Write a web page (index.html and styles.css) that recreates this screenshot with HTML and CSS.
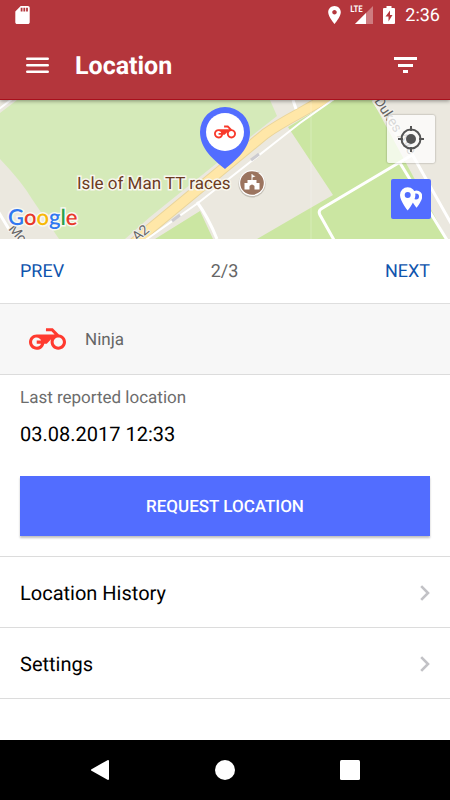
FILE: index.html
```html
<!DOCTYPE html>
<html lang="en">
<head>
<meta charset="utf-8">
<meta name="viewport" content="width=device-width, initial-scale=1">
<title>Location</title>
<link rel="stylesheet" href="styles.css">
</head>
<body>
<svg class="defs" aria-hidden="true">
  <symbol id="motorcycle" viewBox="0 5 24 14">
    <path d="M19.44 9.03L15.41 5H11v2h3.59l2 2H5c-2.8 0-5 2.2-5 5s2.2 5 5 5c2.46 0 4.45-1.69 4.9-4h1.65l2.77-2.77c-.21.54-.32 1.14-.32 1.77 0 2.8 2.2 5 5 5s5-2.2 5-5c0-2.65-1.97-4.77-4.56-4.97zM7.82 15C7.4 16.15 6.28 17 5 17c-1.63 0-3-1.37-3-3s1.37-3 3-3c1.28 0 2.4.85 2.82 2H5v2h2.82zM19 17c-1.66 0-3-1.34-3-3s1.34-3 3-3 3 1.34 3 3-1.34 3-3 3z"/>
  </symbol>
  <symbol id="chevron" viewBox="0 0 10 16">
    <path d="M1.200 1.200L8 8L1.200 14.800" fill="none" stroke="#c2c2c6" stroke-width="2.600"/>
  </symbol>
</svg>
<div class="app">
  <header class="header">
    <div class="status">
      <svg class="status-sd" viewBox="4 2 16 20"><path fill="#fff" fill-rule="evenodd" d="M18 2h-8L4.020 8 4 20c0 1.100.9 2 2 2h12c1.100 0 2-.9 2-2V4c0-1.100-.9-2-2-2zm-6 6h-2V4h2v4zm3 0h-2V4h2v4zm3 0h-2V4h2v4z"/></svg>
      <div class="status-right">
        <svg width="13" height="18" viewBox="5 2 14 20"><path fill="#fff" d="M12 2C8.130 2 5 5.130 5 9c0 5.250 7 13 7 13s7-7.750 7-13c0-3.870-3.130-7-7-7zm0 9.500c-1.380 0-2.500-1.120-2.500-2.500s1.120-2.500 2.500-2.500 2.500 1.120 2.500 2.500-1.120 2.500-2.500 2.500z"/></svg>
        <div class="signal">
          <span class="lte">LTE</span>
          <svg width="18" height="18" viewBox="0 0 18 18"><path fill="#fff" opacity=".35" d="M18 0v18H0z"/><path fill="#fff" d="M0 18L11 7v11z"/></svg>
        </div>
        <svg width="12" height="18" viewBox="0 0 12 18"><path fill="#fff" fill-rule="evenodd" d="M3.500 0h5v2H11q1 0 1 1v14q0 1-1 1H1q-1 0-1-1V3q0-1 1-1h2.500zM7 4.500L2.500 10.500H5.500V15.500L9.500 9H7z"/></svg>
        <span class="time">2:36</span>
      </div>
    </div>
    <div class="toolbar">
      <button class="icon-button" aria-label="Menu"><svg width="23" height="17" viewBox="0 0 23 17"><path stroke="#fff" stroke-width="2.600" stroke-linecap="round" d="M1.300 1.800h20.400M1.300 8.300h20.400M1.300 14.800h20.400"/></svg></button>
      <h1>Location</h1>
      <button class="icon-button" aria-label="Filter"><svg width="23" height="17" viewBox="0 0 23 17"><path fill="#fff" d="M0 0h23v3H0zM4 7h15v3H4zM9 13h5v3H9z"/></svg></button>
    </div>
  </header>

  <section class="map" aria-label="Map">
    <svg class="map-art" viewBox="0 0 450 139" preserveAspectRatio="xMidYMid slice">
      <rect width="450" height="139" fill="#ebe8df"/>
      <path fill="#d5eab9" d="M17 0H270L277 16L217 63L150 117L125 139H59L32 99Q22 82 0 59V13Z"/>
      <path fill="none" stroke="#fff" stroke-width="2" d="M-1 9L12-1"/>
      <path fill="#cbe6a2" d="M155 139L200 111L213 139ZM288 27L334 0H372L447 139H257L300 114L333 95Z"/>
      <path stroke="#f4f2ed" stroke-width="5" d="M374 0L412 56"/>
      <g fill="none">
        <path stroke="#ead59b" stroke-width="11" d="M134 143L150 129L265 34Q276 26 300 13L328-3"/>
        <path stroke="#ffe7a8" stroke-width="9" d="M134 143L150 129L265 34Q276 26 300 13L328-3"/>
        <path stroke="#fff" stroke-width="2" d="M144 141L198 103L272 45L300 23L334-1"/>
        <path stroke="#cccbd0" stroke-width="3" d="M251 60L259 54M172 121L180 115"/>
        <path stroke="#fff" stroke-width="3" d="M197 102Q208 117 217 139M293 0L296 9M412 55L321 109Q318 111 320 115L334 140M400 63L447 140M412 54L452 125M-2 111L10 131"/>
      </g>
      <path d="M311 0V139" stroke="#fff" opacity=".25"/>
      <text class="street" transform="translate(374 1) rotate(57)">Dukes Ave</text>
      <text class="street" transform="translate(8 129) rotate(50)">Mo</text>
      <text class="street" transform="translate(137 142) rotate(-40)">A2</text>
      <text class="place" x="77" y="89">Isle of Man TT races</text>
      <circle cx="252" cy="84" r="13.500" fill="#8a8378" opacity=".4"/>
      <circle cx="252" cy="83" r="13" fill="#fff"/>
      <circle cx="252" cy="83" r="11.800" fill="#9b745f"/>
      <path fill="#fff" d="M251.500 74h1v1l3 1.300-3 1.300V80h4v3h3v6.500h-5V86q-2.500-3-5 0v3.500h-5V83h3v-3h4z"/>
      <text class="google" x="8" y="125"><tspan fill="#3078f0">G</tspan><tspan fill="#e8392b">o</tspan><tspan fill="#f7b908">o</tspan><tspan fill="#3078f0">g</tspan><tspan fill="#2ba24c">l</tspan><tspan fill="#e8392b">e</tspan></text>
      <path fill="#526dff" d="M225 69C214 60 200 49 200 32A25 25 0 0 1 250 32C250 49 236 60 225 69Z"/>
      <circle cx="225" cy="32" r="19" fill="#fff"/>
      <use href="#motorcycle" x="214" y="25" width="22" height="14" fill="#f83a2b"/>
    </svg>
    <div class="map-controls">
      <button class="locate" aria-label="My location"><svg width="28" height="28" viewBox="0 0 28 28"><g fill="none" stroke="#555" stroke-width="2"><circle cx="14" cy="14" r="9.500"/><path d="M14 1v5M14 22v5M1 14h5M22 14h5"/></g><circle cx="14" cy="14" r="5" fill="#555"/></svg></button>
      <button class="pins" aria-label="Show all vehicles"><svg width="22" height="24" viewBox="0 0 22 24"><path fill="#fff" d="M16.500 3.500a5.800 5.800 0 0 1 5.800 5.800c0 4.500-5.800 11.500-5.800 11.500s-5.800-7-5.800-11.500a5.800 5.800 0 0 1 5.800-5.800z"/><circle cx="16" cy="9.500" r="3" fill="#526dff"/><path fill="#fff" d="M7.700.3A7.700 7.700 0 0 1 15.400 8c0 6-7.700 15.500-7.700 15.500S0 14 0 8A7.700 7.700 0 0 1 7.700.3z"/><circle cx="7.700" cy="8" r="3" fill="#526dff"/></svg></button>
    </div>
  </section>

  <main>
    <nav class="pager" aria-label="Vehicles">
      <a href="#prev">PREV</a>
      <span>2/3</span>
      <a href="#next">NEXT</a>
    </nav>
    <div class="vehicle">
      <svg width="37" height="22"><use href="#motorcycle" fill="#ff3a2f"/></svg>
      <span>Ninja</span>
    </div>
    <section class="report">
      <p class="label">Last reported location</p>
      <p class="date">03.08.2017 12:33</p>
      <button class="request">REQUEST LOCATION</button>
    </section>
    <a class="row" href="#history">Location History<svg width="10" height="16"><use href="#chevron"/></svg></a>
    <a class="row" href="#settings">Settings<svg width="10" height="16"><use href="#chevron"/></svg></a>
  </main>

  <footer class="system">
    <button aria-label="Back"><svg width="20" height="20" viewBox="0 0 20 20"><path fill="#fff" stroke="#fff" stroke-width="2" stroke-linejoin="round" d="M2 10L18 1V19Z"/></svg></button>
    <button aria-label="Home"><svg width="20" height="20" viewBox="0 0 20 20"><circle cx="10" cy="10" r="10" fill="#fff"/></svg></button>
    <button aria-label="Recent apps"><svg width="20" height="20" viewBox="0 0 20 20"><rect width="20" height="20" rx="1.500" fill="#fff"/></svg></button>
  </footer>
</div>
</body>
</html>
```
FILE: styles.css
```css
* { box-sizing: border-box; }

body {
  margin: 0;
  background: #fff;
  color: #000;
  font-family: Roboto, "Liberation Sans", sans-serif;
  text-rendering: geometricPrecision;
}

h1, p { margin: 0; }
a { color: inherit; text-decoration: none; }

button {
  display: flex;
  align-items: center;
  justify-content: center;
  border: 0;
  padding: 0;
  background: none;
  font: inherit;
  text-rendering: inherit;
}

svg { display: block; }

.defs {
  position: absolute;
  width: 0;
  height: 0;
}

.app {
  display: flex;
  flex-direction: column;
  min-height: 100vh;
}

/* Header */
.header {
  position: relative;
  z-index: 1;
  background: #b4363c;
  border-bottom: 1px solid #a8101c;
  color: #fff;
  box-shadow: 0 1px 4px rgba(0, 0, 0, 0.4);
}

.status {
  display: flex;
  align-items: center;
  justify-content: space-between;
  height: 30px;
  padding: 0 10px 0 15px;
}

.status-sd {
  width: 15px;
  height: 18px;
}

.status-right {
  display: flex;
  align-items: center;
  gap: 10px;
}

.signal {
  position: relative;
  padding-left: 4px;
}

.lte {
  position: absolute;
  top: 0;
  left: -1px;
  font-family: "Roboto Condensed", "Liberation Sans Narrow", Roboto, sans-serif;
  font-size: 9px;
  font-weight: 500;
  line-height: 8px;
}

.time {
  padding-top: 2px;
  font-size: 18px;
  line-height: 20px;
}

.toolbar {
  display: flex;
  align-items: center;
  height: 69px;
  padding: 2px 29px 0 21px;
}

.icon-button {
  width: 32px;
  height: 32px;
}

.toolbar h1 {
  flex: 1;
  padding: 2px 0 0 22px;
  font-size: 25px;
  font-weight: 700;
  line-height: 32px;
}

/* Map */
.map { position: relative; }

.map-art {
  width: 100%;
  height: 139px;
}

.street {
  fill: #666;
  stroke: #f3f1ec;
  stroke-width: 2px;
  paint-order: stroke;
  font-size: 14px;
}

.place {
  fill: #6b3b22;
  stroke: #f8f6ee;
  stroke-width: 3px;
  paint-order: stroke;
  font-size: 17px;
}

.google {
  stroke: #f8f8f2;
  stroke-width: 3px;
  paint-order: stroke;
  font-family: Lato, sans-serif;
  font-size: 22px;
  font-weight: 600;
}

.map-controls {
  position: absolute;
  top: 15px;
  right: 15px;
  display: flex;
  flex-direction: column;
  align-items: center;
  gap: 16px;
}

.locate {
  width: 48px;
  height: 48px;
  background: rgba(255, 255, 255, 0.75);
  border-radius: 2px;
  box-shadow: 0 0 2px rgba(0, 0, 0, 0.4);
}

.pins {
  width: 40px;
  height: 40px;
  background: #526dff;
  border-radius: 2px;
}

/* Pager and vehicle */
.pager {
  display: flex;
  align-items: center;
  justify-content: space-between;
  height: 65px;
  padding: 0 20px;
  border-bottom: 1px solid #dedede;
  color: #666;
  font-size: 18px;
}

.pager a { color: #0f54ad; }

.vehicle {
  display: flex;
  align-items: center;
  gap: 19px;
  height: 71px;
  padding: 0 29px;
  background: #f7f7f7;
  border-bottom: 1px solid #dcdcdc;
  color: #666;
  font-size: 17px;
}

.vehicle span { padding-top: 2px; }

/* Report */
.report {
  padding: 11px 20px 20px;
  border-bottom: 1px solid #dcdcdc;
}

.label {
  color: #6c6c6c;
  font-size: 17px;
  line-height: 24px;
}

.date {
  padding: 12px 0 30px;
  font-size: 20px;
  line-height: 24px;
}

.request {
  width: 100%;
  height: 60px;
  padding-top: 2px;
  background: #526dff;
  color: #fff;
  font-size: 17px;
  font-weight: 500;
  box-shadow: 0 2px 2px rgba(0, 0, 0, 0.25);
}

.row {
  display: flex;
  align-items: center;
  justify-content: space-between;
  height: 71px;
  padding: 2px 20px 0;
  border-bottom: 1px solid #dcdcdc;
  font-size: 20px;
}

/* System navigation */
.system {
  display: flex;
  justify-content: center;
  gap: 85px;
  height: 60px;
  margin-top: auto;
  background: #000;
}

.system button {
  width: 40px;
  height: 60px;
}
```
